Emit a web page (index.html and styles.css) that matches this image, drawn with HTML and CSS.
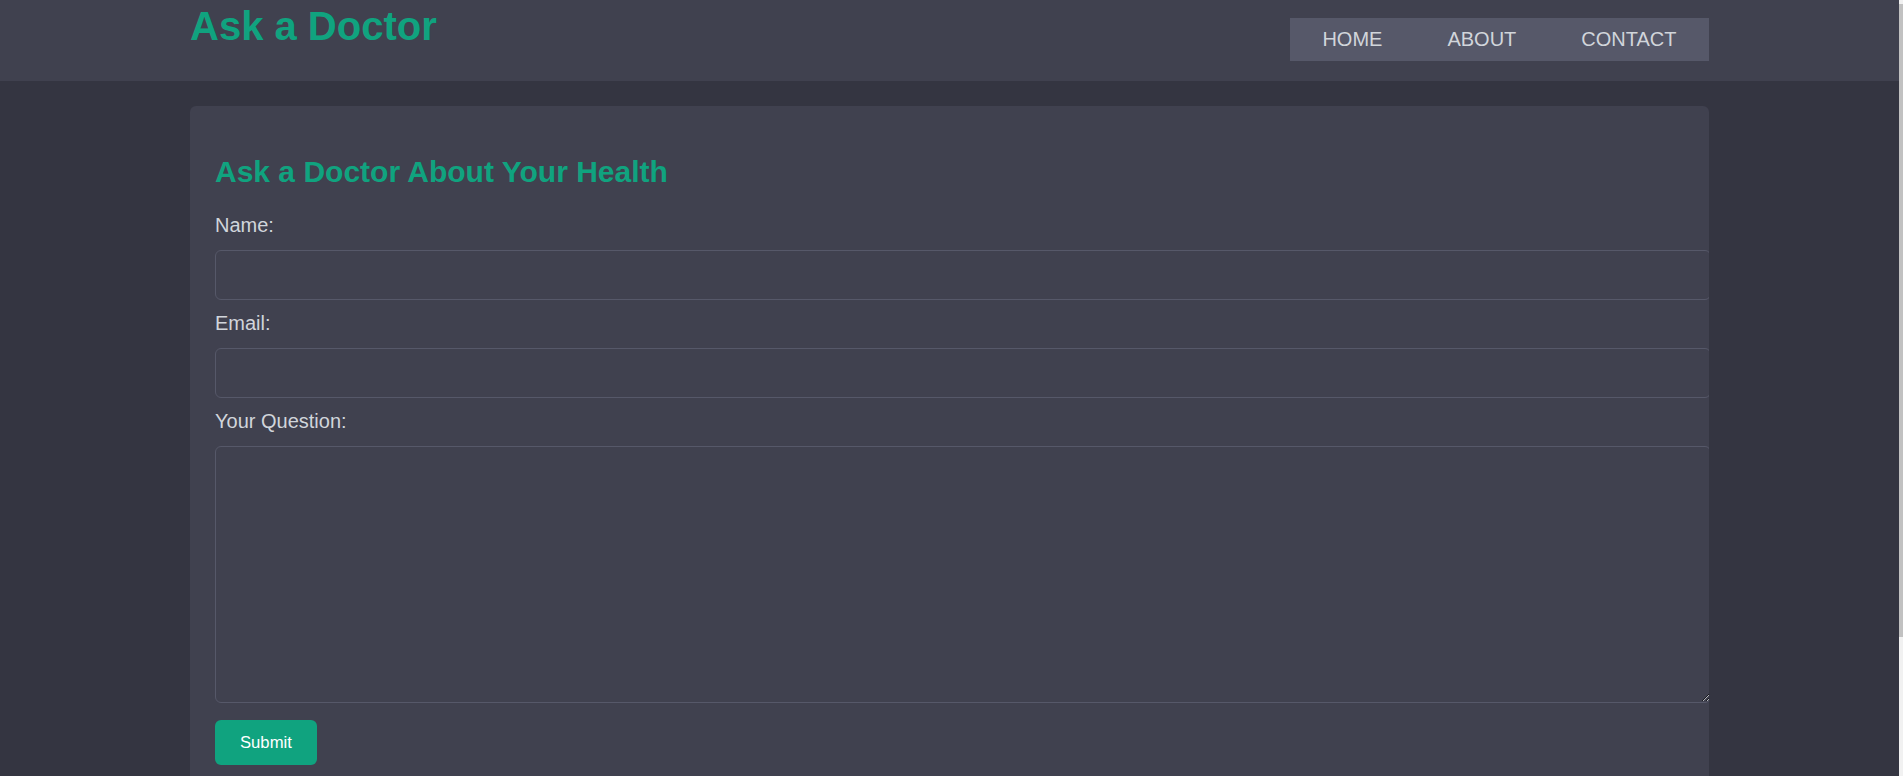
FILE: index.html
```html
<!DOCTYPE html>
<html lang="en">
<head>
<meta charset="utf-8">
<title>Ask a Doctor</title>
<link rel="stylesheet" href="styles.css">
</head>
<body>
<header class="site-header">
  <div class="header-inner">
    <h1 class="logo">Ask a Doctor</h1>
    <nav class="nav">
      <a href="#" class="nav-link">Home</a>
      <a href="#" class="nav-link">About</a>
      <a href="#" class="nav-link">Contact</a>
    </nav>
  </div>
</header>
<main class="container">
  <section class="card">
    <h2 class="card-title">Ask a Doctor About Your Health</h2>
    <form class="ask-form">
      <label class="field-label" for="name">Name:</label>
      <input class="field" type="text" id="name">
      <label class="field-label" for="email">Email:</label>
      <input class="field" type="email" id="email">
      <label class="field-label" for="question">Your Question:</label>
      <textarea class="field field-area" id="question"></textarea>
      <button type="button" class="submit-btn">Submit</button>
    </form>
  </section>
</main>
<div class="fake-scrollbar"><div class="fake-thumb"></div></div>
</body>
</html>
```
FILE: styles.css
```css
html, body {
  margin: 0;
}
body {
  padding-right: 4px;
  background: #343541;
  color: #d1d5db;
  font-family: "Liberation Sans", Arial, sans-serif;
}
.site-header {
  background: #40414f;
  height: 81px;
}
.header-inner {
  width: 1519px;
  margin: 0 auto;
  display: flex;
  justify-content: space-between;
  align-items: flex-start;
}
.logo {
  margin: 4px 0 0;
  font-size: 40px;
  font-weight: bold;
  line-height: normal;
  color: #10a37f;
}
.nav {
  margin-top: 18px;
  display: flex;
  background: #565869;
}
.nav-link {
  padding: 10px 32.5px;
  font-size: 20px;
  line-height: 23px;
  color: #d1d5db;
  text-decoration: none;
  text-transform: uppercase;
}
.container {
  width: 1519px;
  margin: 25px auto 0;
}
.card {
  background: #40414f;
  border-radius: 6px;
  padding: 26px 25px 25px;
  overflow: hidden;
}
.card-title {
  margin: 23px 0 25px;
  font-size: 30px;
  font-weight: bold;
  line-height: normal;
  color: #10a37f;
}
.ask-form {
  display: block;
}
.field-label {
  display: block;
  font-size: 20px;
  line-height: normal;
  color: #d1d5db;
}
.field {
  display: block;
  box-sizing: content-box;
  width: 100%;
  margin: 12.5px 0;
  padding: 12.5px;
  border: 1px solid #565869;
  border-radius: 6px;
  background: #40414f;
  color: #d1d5db;
  font-family: "Liberation Sans", Arial, sans-serif;
  font-size: 20px;
  line-height: normal;
  outline: none;
}
.field-area {
  box-sizing: border-box;
  width: calc(100% + 27px);
  height: 257px;
  margin-bottom: 17.5px;
  resize: vertical;
}
.submit-btn {
  display: block;
  padding: 12.5px 25px;
  border: none;
  border-radius: 6px;
  background: #10a37f;
  color: #ffffff;
  font-family: "Liberation Sans", Arial, sans-serif;
  font-size: 16.67px;
  line-height: normal;
}
.fake-scrollbar {
  position: fixed;
  top: 0;
  right: 0;
  width: 4px;
  height: 100%;
  background: #f1f1f1;
}
.fake-thumb {
  margin-top: 4px;
  height: 633px;
  background: #c1c1c1;
}
```
